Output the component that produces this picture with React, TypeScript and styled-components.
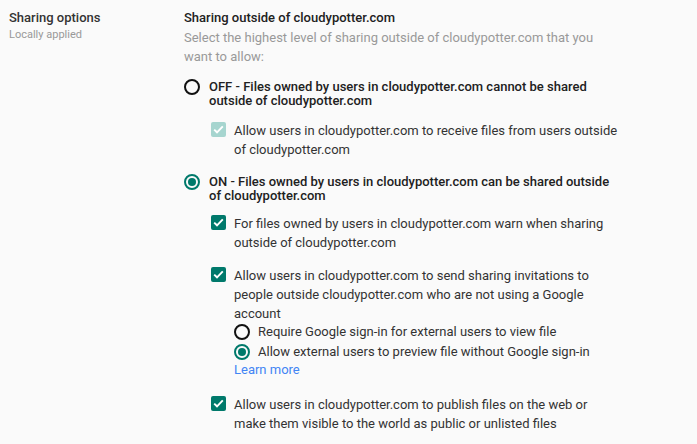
import React from "react";
import styled, { createGlobalStyle } from "styled-components";

const GlobalStyle = createGlobalStyle`
  html, body { margin: 0; padding: 0; background: #fafafa; }
  body { font-family: Roboto, "Noto Sans", Arial, sans-serif; color: #212121; -webkit-font-smoothing: antialiased; }
`;

const Page = styled.div`
  display: flex;
  width: 697px;
  height: 444px;
  overflow: hidden;
  background: #fafafa;
`;

const LabelCol = styled.div`
  width: 175px;
  padding: 10px 0 0 9px;
  box-sizing: border-box;
`;

const LabelTitle = styled.div`
  font-size: 13px;
  font-weight: 500;
  line-height: 16px;
  color: #333;
`;

const LabelSub = styled.div`
  font-size: 11px;
  line-height: 14px;
  color: #999;
  margin-top: 2px;
`;

const Main = styled.div`
  width: 437px;
  padding: 9px 0 0 0;
  margin-left: 9px;
  display: flex;
  flex-direction: column;
`;

const Title = styled.div`
  font-size: 13px;
  font-weight: 500;
  line-height: 17px;
  color: #212121;
`;

const Desc = styled.div`
  font-size: 13px;
  line-height: 19px;
  color: #999;
  margin-top: 2px;
  margin-bottom: 14px;
`;

const RadioRow = styled.label`
  display: flex;
  align-items: flex-start;
  gap: 9px;
  font-size: 13px;
  line-height: 14px;
  font-weight: 500;
  color: #212121;
`;

const RadioCircle = styled.span<{ $on?: boolean }>`
  flex: none;
  width: 16px;
  height: 16px;
  box-sizing: border-box;
  border-radius: 50%;
  border: 2px solid ${(p) => (p.$on ? "#00796b" : "#111")};
  display: flex;
  align-items: center;
  justify-content: center;
  margin-top: -1px;
  &::after {
    content: "";
    width: 8px;
    height: 8px;
    border-radius: 50%;
    background: #00796b;
    display: ${(p) => (p.$on ? "block" : "none")};
  }
`;

const SubList = styled.div<{ $top: number }>`
  display: flex;
  flex-direction: column;
  padding-left: 27px;
  margin-top: ${(p) => p.$top}px;
  gap: 14px;
`;

const CheckRow = styled.div`
  display: flex;
  align-items: flex-start;
  gap: 8px;
  font-size: 13px;
  line-height: 19px;
  color: #333;
`;

const CheckBox = styled.span<{ $disabled?: boolean }>`
  flex: none;
  width: 15px;
  height: 15px;
  border-radius: 2px;
  margin-top: 1px;
  background: ${(p) => (p.$disabled ? "#a6d5cf" : "#00796b")};
  display: flex;
  align-items: center;
  justify-content: center;
`;

const CheckText = styled.div`
  display: flex;
  flex-direction: column;
`;

const InnerRadios = styled.div`
  display: flex;
  flex-direction: column;
  margin-top: -1px;
`;

const InnerRadio = styled.label`
  display: flex;
  align-items: center;
  gap: 8px;
  height: 20px;
  font-size: 13px;
  line-height: 20px;
  color: #333;
  & > span { margin-top: 0; }
`;

const LearnMore = styled.a`
  color: #4285f4;
  text-decoration: none;
  font-size: 13px;
  line-height: 19px;
  margin-top: -2px;
  margin-bottom: 2px;
`;

const Section = styled.div<{ $gap?: number }>`
  margin-bottom: ${(p) => p.$gap ?? 0}px;
`;

const Check = ({ disabled }: { disabled?: boolean }) => (
  <CheckBox $disabled={disabled}>
    <svg width="11" height="9" viewBox="0 0 11 9">
      <path d="M1.2 4.6 L4 7.3 L9.8 1.3" fill="none" stroke="#fff" strokeWidth="1.9" />
    </svg>
  </CheckBox>
);

export default function App() {
  return (
    <Page>
      <GlobalStyle />
      <LabelCol>
        <LabelTitle>Sharing options</LabelTitle>
        <LabelSub>Locally applied</LabelSub>
      </LabelCol>
      <Main>
        <Title>Sharing outside of cloudypotter.com</Title>
        <Desc>Select the highest level of sharing outside of cloudypotter.com that you want to allow:</Desc>

        <Section $gap={16}>
          <RadioRow>
            <RadioCircle />
            <span>OFF - Files owned by users in cloudypotter.com cannot be shared outside of cloudypotter.com</span>
          </RadioRow>
          <SubList $top={13}>
            <CheckRow>
              <Check disabled />
              <CheckText>Allow users in cloudypotter.com to receive files from users outside of cloudypotter.com</CheckText>
            </CheckRow>
          </SubList>
        </Section>

        <Section>
          <RadioRow>
            <RadioCircle $on />
            <span>ON - Files owned by users in cloudypotter.com can be shared outside of cloudypotter.com</span>
          </RadioRow>
          <SubList $top={11}>
            <CheckRow>
              <Check />
              <CheckText>For files owned by users in cloudypotter.com warn when sharing outside of cloudypotter.com</CheckText>
            </CheckRow>
            <CheckRow>
              <Check />
              <CheckText>
                <span>Allow users in cloudypotter.com to send sharing invitations to people outside cloudypotter.com who are not using a Google account</span>
                <InnerRadios>
                  <InnerRadio>
                    <RadioCircle />
                    Require Google sign-in for external users to view file
                  </InnerRadio>
                  <InnerRadio>
                    <RadioCircle $on />
                    Allow external users to preview file without Google sign-in
                  </InnerRadio>
                </InnerRadios>
                <LearnMore href="#">Learn more</LearnMore>
              </CheckText>
            </CheckRow>
            <CheckRow>
              <Check />
              <CheckText>Allow users in cloudypotter.com to publish files on the web or make them visible to the world as public or unlisted files</CheckText>
            </CheckRow>
          </SubList>
        </Section>
      </Main>
    </Page>
  );
}
